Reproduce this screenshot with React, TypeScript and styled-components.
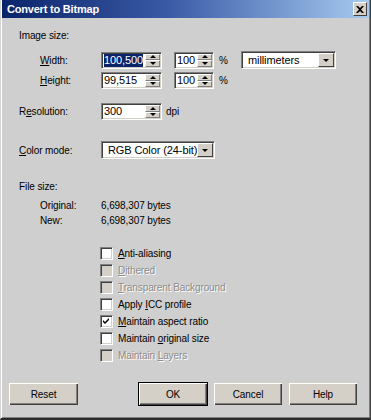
import React from "react";
import styled, { createGlobalStyle } from "styled-components";

const Global = createGlobalStyle`
  html, body {
    margin: 0;
    padding: 0;
    background: #cfcfcf;
  }
  body {
    font-family: "Liberation Sans", Arial, sans-serif;
    font-size: 10px;
    letter-spacing: -0.1px;
    color: #000;
  }
`;

function U({ children }: { children: string }) {
  return <Under>{children}</Under>;
}

function Spin() {
  return (
    <SpinCol>
      <SpinBtn>
        <Arrow $up />
      </SpinBtn>
      <SpinBtn>
        <Arrow />
      </SpinBtn>
    </SpinCol>
  );
}

function SpinBox({ w, value, selected }: { w: number; value: string; selected?: boolean }) {
  return (
    <Field $w={w}>
      <FieldText>{selected ? <Sel>{value}</Sel> : value}</FieldText>
      <Spin />
    </Field>
  );
}

function Combo({ w, value }: { w: number; value: string }) {
  return (
    <Field $w={w} $h={18}>
      <FieldText $pad={5}>{value}</FieldText>
      <DropBtn>
        <Arrow />
      </DropBtn>
    </Field>
  );
}

function Check({ label, checked, disabled }: { label: React.ReactNode; checked?: boolean; disabled?: boolean }) {
  return (
    <CheckRow>
      <Box $disabled={disabled}>
        {checked && (
          <svg width="7" height="7" viewBox="0 0 7 7">
            <path d="M0 2 L2 4 L6 0 L6 2 L2 6 L0 4 Z" fill="#000" />
          </svg>
        )}
      </Box>
      <CheckLabel $disabled={disabled}>{label}</CheckLabel>
    </CheckRow>
  );
}

export default function App() {
  return (
    <>
      <Global />
      <Window>
        <TitleBar>
          <Title>Convert to Bitmap</Title>
          <CloseBtn>
            <svg width="8" height="7" viewBox="0 0 8 7">
              <path d="M0 0 H2 L4 2 L6 0 H8 L5 3.5 L8 7 H6 L4 5 L2 7 H0 L3 3.5 Z" fill="#000" />
            </svg>
          </CloseBtn>
        </TitleBar>
        <Content>
          <Section $top={11}>Image size:</Section>
          <Row $top={9}>
            <Label><U>W</U>idth:</Label>
            <SpinBox w={61} value="100,500" selected />
            <SpinBox w={40} value="100" />
            <Unit>%</Unit>
            <Combo w={95} value="millimeters" />
          </Row>
          <Row $top={3}>
            <Label><U>H</U>eight:</Label>
            <SpinBox w={61} value="99,515" />
            <SpinBox w={40} value="100" />
            <Unit>%</Unit>
          </Row>
          <Row $top={14} $flush>
            <Label $w={82}>R<U>e</U>solution:</Label>
            <SpinBox w={61} value="300" />
            <Unit $gap={4}>dpi</Unit>
          </Row>
          <Row $top={21} $flush>
            <Label $w={82}><U>C</U>olor mode:</Label>
            <Combo w={114} value="RGB Color (24-bit)" />
          </Row>
          <Section $top={21}>File size:</Section>
          <InfoRow $top={6}>
            <Label>Original:</Label>
            <span>6,698,307 bytes</span>
          </InfoRow>
          <InfoRow $top={2}>
            <Label>New:</Label>
            <span>6,698,307 bytes</span>
          </InfoRow>
          <Checks>
            <Check label={<><U>A</U>nti-aliasing</>} />
            <Check label={<><U>D</U>ithered</>} disabled />
            <Check label={<><U>T</U>ransparent Background</>} disabled />
            <Check label={<>Apply <U>I</U>CC profile</>} />
            <Check label={<><U>M</U>aintain aspect ratio</>} checked />
            <Check label={<>Maintain <U>o</U>riginal size</>} />
            <Check label={<>Maintain <U>L</U>ayers</>} disabled />
          </Checks>
        </Content>
        <Footer>
          <Button $w={71}>Reset</Button>
          <Spacer />
          <Button $default>OK</Button>
          <Button>Cancel</Button>
          <Button>Help</Button>
        </Footer>
      </Window>
    </>
  );
}

const Window = styled.div`
  width: 371px;
  height: 420px;
  box-sizing: border-box;
  background: #cfcfcf;
  border-left: 1px solid #d4d4d4;
  border-right: 1px solid #404040;
  border-bottom: 2px solid #2a2a2a;
  box-shadow: inset 1px 0 0 #ffffff, inset -1px -1px 0 #808080;
  display: flex;
  flex-direction: column;
  overflow: hidden;
`;

const TitleBar = styled.div`
  height: 18px;
  margin: 0 1px 0 1px;
  background: linear-gradient(90deg, #0a246a 0%, #3a5aa6 45%, #a6caf0 100%);
  display: flex;
  align-items: center;
  justify-content: space-between;
  padding: 0 2px 0 5px;
`;

const Title = styled.div`
  color: #fff;
  font-weight: bold;
  font-size: 11px;
  letter-spacing: -0.2px;
  font-family: "Liberation Sans", Arial, sans-serif;
`;

const CloseBtn = styled.div`
  width: 14px;
  height: 14px;
  box-sizing: border-box;
  background: #d4d0c8;
  border-top: 1px solid #fff;
  border-left: 1px solid #fff;
  border-right: 1px solid #404040;
  border-bottom: 1px solid #404040;
  display: flex;
  align-items: center;
  justify-content: center;
`;

const Content = styled.div`
  padding-left: 18px;
  display: flex;
  flex-direction: column;
`;

const Section = styled.div<{ $top: number }>`
  margin-top: ${(p) => p.$top}px;
  line-height: 13px;
  height: 13px;
`;

const Row = styled.div<{ $top: number; $flush?: boolean }>`
  margin-top: ${(p) => p.$top}px;
  margin-left: ${(p) => (p.$flush ? 0 : 21)}px;
  display: flex;
  align-items: center;
  gap: 12px;
`;

const Label = styled.div<{ $w?: number }>`
  width: ${(p) => p.$w ?? 61}px;
  margin-right: -12px;
  line-height: 13px;
  flex: none;
`;

const Under = styled.span`
  text-decoration: underline;
`;

const Field = styled.div<{ $w: number; $h?: number }>`
  width: ${(p) => p.$w}px;
  height: ${(p) => p.$h ?? 17}px;
  box-sizing: border-box;
  background: #fff;
  border-top: 1px solid #808080;
  border-left: 1px solid #808080;
  border-right: 1px solid #fff;
  border-bottom: 1px solid #fff;
  box-shadow: inset 1px 1px 0 #404040, inset -1px -1px 0 #d4d0c8;
  display: flex;
  align-items: stretch;
  padding: 1px;
  flex: none;
`;

const FieldText = styled.div<{ $pad?: number }>`
  flex: 1;
  display: flex;
  align-items: center;
  padding-left: ${(p) => p.$pad ?? 1}px;
  overflow: hidden;
  white-space: nowrap;
  line-height: 13px;
  font-size: 11px;
`;

const Sel = styled.span`
  background: #0a246a;
  color: #fff;
`;

const SpinCol = styled.div`
  width: 15px;
  display: flex;
  flex-direction: column;
  flex: none;
`;

const SpinBtn = styled.div`
  flex: 1;
  box-sizing: border-box;
  background: #d4d0c8;
  border-top: 1px solid #fff;
  border-left: 1px solid #fff;
  border-right: 1px solid #808080;
  border-bottom: 1px solid #808080;
  display: flex;
  align-items: center;
  justify-content: center;
`;

const DropBtn = styled(SpinBtn)`
  flex: none;
  width: 16px;
  border-right-color: #404040;
  border-bottom-color: #404040;
`;

const Arrow = styled.div<{ $up?: boolean }>`
  width: 0;
  height: 0;
  border-left: 3px solid transparent;
  border-right: 3px solid transparent;
  ${(p) => (p.$up ? "border-bottom: 3px solid #000;" : "border-top: 3px solid #000;")}
`;

const Unit = styled.div<{ $gap?: number }>`
  margin-left: ${(p) => (p.$gap ?? 5) - 12}px;
  margin-right: -2px;
  width: 12px;
`;

const InfoRow = styled.div<{ $top: number }>`
  margin-top: ${(p) => p.$top}px;
  margin-left: 21px;
  display: flex;
  line-height: 13px;
  gap: 12px;
`;

const Checks = styled.div`
  margin-top: 18px;
  margin-left: 81px;
  display: flex;
  flex-direction: column;
`;

const CheckRow = styled.div`
  height: 17px;
  display: flex;
  align-items: center;
  gap: 5px;
`;

const Box = styled.div<{ $disabled?: boolean }>`
  width: 13px;
  height: 13px;
  box-sizing: border-box;
  background: ${(p) => (p.$disabled ? "#d4d0c8" : "#fff")};
  border-top: 1px solid #808080;
  border-left: 1px solid #808080;
  border-right: 1px solid #fff;
  border-bottom: 1px solid #fff;
  box-shadow: inset 1px 1px 0 #404040, inset -1px -1px 0 #d4d0c8;
  display: flex;
  align-items: center;
  justify-content: center;
`;

const CheckLabel = styled.div<{ $disabled?: boolean }>`
  color: ${(p) => (p.$disabled ? "#8c8c8c" : "#000")};
  text-shadow: ${(p) => (p.$disabled ? "1px 1px 0 #fff" : "none")};
  line-height: 13px;
`;

const Footer = styled.div`
  margin-top: auto;
  margin-bottom: 12px;
  padding: 0 12px 0 7px;
  display: flex;
  gap: 5px;
`;

const Spacer = styled.div`
  flex: 1;
`;

const Button = styled.div<{ $w?: number; $default?: boolean }>`
  width: ${(p) => p.$w ?? 70}px;
  height: 24px;
  box-sizing: border-box;
  background: #d4d0c8;
  border: 1px solid ${(p) => (p.$default ? "#000" : "#d4d0c8")};
  box-shadow: inset 1px 1px 0 #fff, inset -1px -1px 0 #404040, inset -2px -2px 0 #808080;
  display: flex;
  align-items: center;
  justify-content: center;
`;
